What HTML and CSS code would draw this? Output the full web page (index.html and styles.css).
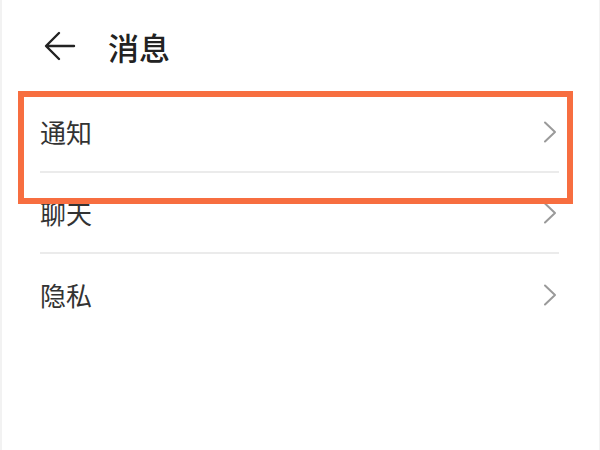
FILE: index.html
```html
<!DOCTYPE html>
<html lang="zh-CN">
<head>
<meta charset="utf-8">
<link rel="stylesheet" href="styles.css">
</head>
<body>
<div class="page">
  <header class="header">
    <svg class="back" width="32" height="30" viewBox="0 0 32 30">
      <path d="M30 15 H3 M15 2 L2 15 L15 28" fill="none" stroke="#222" stroke-width="2.4" stroke-linecap="round" stroke-linejoin="round"/>
    </svg>
    <h1 class="title">消息</h1>
  </header>
  <ul class="list">
    <li class="row"><span class="label">通知</span><svg class="chev" width="14" height="22" viewBox="0 0 14 22"><path d="M2 1.5 L12 11 L2 20.5" fill="none" stroke="#9a9a9a" stroke-width="2" stroke-linecap="round" stroke-linejoin="round"/></svg></li>
    <li class="row"><span class="label">聊天</span><svg class="chev" width="14" height="22" viewBox="0 0 14 22"><path d="M2 1.5 L12 11 L2 20.5" fill="none" stroke="#9a9a9a" stroke-width="2" stroke-linecap="round" stroke-linejoin="round"/></svg></li>
    <li class="row"><span class="label">隐私</span><svg class="chev" width="14" height="22" viewBox="0 0 14 22"><path d="M2 1.5 L12 11 L2 20.5" fill="none" stroke="#9a9a9a" stroke-width="2" stroke-linecap="round" stroke-linejoin="round"/></svg></li>
  </ul>
  <div class="highlight"></div>
</div>
</body>
</html>
```
FILE: styles.css
```css
html, body {
  margin: 0;
  padding: 0;
  background: #ffffff;
}
body {
  font-family: "Noto Sans CJK SC", "Noto Sans", sans-serif;
  color: #333;
}
.page {
  position: relative;
  width: 600px;
  height: 450px;
  box-sizing: border-box;
  border-left: 2px solid #f2f2f2;
  border-right: 1px solid #f2f2f2;
  overflow: hidden;
}
.header {
  height: 92px;
  display: flex;
  align-items: center;
  padding-left: 42px;
  box-sizing: border-box;
}
.back {
  display: block;
}
.title {
  margin: 0 0 0 32px;
  font-size: 31px;
  font-weight: 500;
  color: #222;
  line-height: 1;
}
.list {
  list-style: none;
  margin: 0;
  padding: 0 40px 0 38px;
}
.row {
  height: 81px;
  box-sizing: border-box;
  display: flex;
  align-items: center;
  justify-content: space-between;
  border-bottom: 2px solid #ebebeb;
}
.row:last-child {
  border-bottom: none;
}
.label {
  font-size: 26px;
  color: #333;
  line-height: 1;
}
.chev {
  display: block;
  margin-right: 2px;
}
.highlight {
  position: absolute;
  left: 16px;
  top: 91px;
  width: 555px;
  height: 113px;
  box-sizing: border-box;
  border: 6px solid #f76e40;
}
```
